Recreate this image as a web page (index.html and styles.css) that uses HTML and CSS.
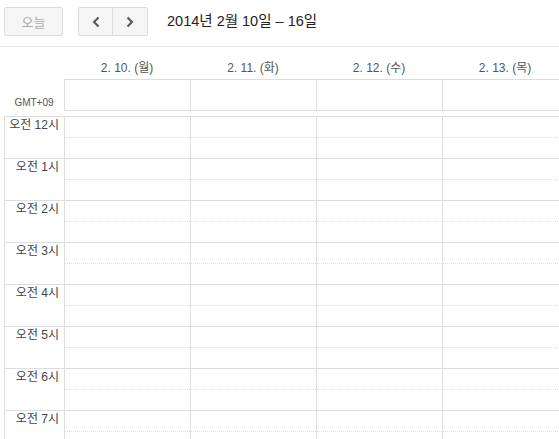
FILE: index.html
```html
<!DOCTYPE html>
<html lang="ko">
<head>
    <meta charset="UTF-8">
    <meta name="viewport" content="width=device-width, initial-scale=1.0">
    <title>캘린더 - 주</title>
    <link rel="stylesheet" href="styles.css">
</head>
<body>
    <div class="toolbar">
        <button class="today-btn" disabled>오늘</button>
        <div class="nav">
            <button class="nav-btn" aria-label="이전">
                <svg width="8" height="12" viewBox="0 0 8 12"><polyline points="6.5,1.5 2,6 6.5,10.5" fill="none" stroke="#555" stroke-width="2"/></svg>
            </button>
            <button class="nav-btn" aria-label="다음">
                <svg width="8" height="12" viewBox="0 0 8 12"><polyline points="1.5,1.5 6,6 1.5,10.5" fill="none" stroke="#555" stroke-width="2"/></svg>
            </button>
        </div>
        <div class="title">2014년 2월 10일 – 16일</div>
    </div>

    <div class="week">
        <div class="row day-heads">
            <div></div>
            <div class="day-head">2. 10. (월)</div>
            <div class="day-head">2. 11. (화)</div>
            <div class="day-head">2. 12. (수)</div>
            <div class="day-head">2. 13. (목)</div>
        </div>

        <div class="row allday">
            <div class="tz">GMT+09</div>
            <div class="allday-cell"></div>
            <div class="allday-cell"></div>
            <div class="allday-cell"></div>
            <div class="allday-cell"></div>
        </div>

        <div class="row grid" id="grid">
            <div class="gutter" id="gutter"></div>
        </div>
    </div>

    <script>
        // build hour labels and day columns
        var gutter = document.getElementById('gutter');
        var grid = document.getElementById('grid');
        var hours = 8;

        for (var h = 0; h < hours; h++) {
            var label = document.createElement('div');
            label.className = 'hour label';
            label.textContent = '오전 ' + (h === 0 ? 12 : h) + '시';
            gutter.appendChild(label);
        }

        for (var d = 0; d < 4; d++) {
            var col = document.createElement('div');
            col.className = 'day-col';
            for (var i = 0; i < hours; i++) {
                var slot = document.createElement('div');
                slot.className = 'hour';
                slot.innerHTML = '<div class="half"></div>';
                col.appendChild(slot);
            }
            grid.appendChild(col);
        }
    </script>
</body>
</html>
```

FILE: styles.css
```css
body {
    margin: 0;
    font-family: "Liberation Sans", Arial, "Noto Sans CJK KR", sans-serif;
    background: #fff;
    color: #222;
    overflow: hidden;
}

.toolbar {
    display: flex;
    align-items: flex-start;
    height: 47px;
    padding: 7px 4px 0;
    box-sizing: border-box;
    border-bottom: 1px solid #e5e5e5;
}

button {
    font-family: inherit;
    background: #f5f5f5;
    border: 1px solid #dcdcdc;
    border-radius: 2px;
    height: 29px;
    padding: 0;
    margin: 0;
}

.today-btn {
    width: 59px;
    font-size: 13px;
    color: #aaa;
}

.nav {
    display: flex;
    margin-left: 15px;
}

.nav-btn {
    width: 35px;
    display: flex;
    align-items: center;
    justify-content: center;
}

.nav-btn:first-child {
    border-radius: 2px 0 0 2px;
}

.nav-btn:last-child {
    width: 35px;
    border-left: none;
    border-radius: 0 2px 2px 0;
}

.title {
    margin-left: 19px;
    font-size: 14.5px;
    line-height: 29px;
    color: #222;
}

.week {
    padding-left: 4px;
}

.row {
    display: grid;
    grid-template-columns: 60px repeat(4, 126px);
}

.day-heads {
    height: 32px;
}

.day-head {
    padding-top: 14px;
    font-size: 12px;
    line-height: 14px;
    text-align: center;
    color: #555;
}

.allday {
    height: 32px;
}

.tz {
    display: flex;
    align-items: flex-end;
    justify-content: center;
    padding-bottom: 3px;
    font-size: 10px;
    color: #555;
}

.allday-cell {
    border: 1px solid #ddd;
    border-right: none;
}

.grid {
    margin-top: 5px;
}

.gutter {
    border-left: 1px solid #ddd;
}

.day-col {
    border-left: 1px solid #ddd;
}

.hour {
    height: 42px;
    box-sizing: border-box;
    border-top: 1px solid #ddd;
}

.half {
    height: 21px;
    box-sizing: border-box;
    border-bottom: 1px dotted #ddd;
}

.label {
    padding: 1px 5px 0 0;
    font-size: 12px;
    line-height: 14px;
    text-align: right;
    color: #444;
}
```
